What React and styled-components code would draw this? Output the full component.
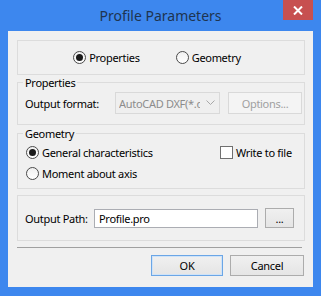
import React from 'react';
import styled, { createGlobalStyle } from 'styled-components';

const GlobalStyle = createGlobalStyle`
  html, body {
    margin: 0;
    padding: 0;
  }
  body {
    font-family: "Noto Sans", "Open Sans", sans-serif;
    font-size: 11px;
    color: #000;
  }
`;

const Frame = styled.div`
  width: 321px;
  height: 296px;
  box-sizing: border-box;
  background: #3d87ee;
  display: flex;
  flex-direction: column;
`;

const TitleBar = styled.div`
  height: 31px;
  display: grid;
  grid-template-columns: 1fr auto 1fr;
  align-items: center;
`;

const Title = styled.div`
  grid-column: 2;
  font-size: 14px;
  color: #1e3450;
  line-height: 31px;
`;

const CloseButton = styled.div`
  grid-column: 3;
  justify-self: end;
  align-self: start;
  width: 30px;
  height: 20px;
  margin-right: 8px;
  background: #c75050;
  display: flex;
  align-items: center;
  justify-content: center;
`;

const Client = styled.div`
  flex: 1;
  margin: 0 8px 9px;
  background: #f0f0f0;
  padding: 9px 8px 11px 9px;
  display: flex;
  flex-direction: column;
  white-space: nowrap;
  letter-spacing: -0.3px;
`;

const Panel = styled.div`
  border: 1px solid #dcdcdc;
  box-sizing: border-box;
  height: ${(p) => p.$height}px;
  margin-top: ${(p) => p.$top || 0}px;
  display: flex;
  align-items: center;
`;

const ModeRow = styled.div`
  flex: 1;
  display: flex;
  justify-content: center;
  gap: 36px;
  padding-right: 8px;
`;

const Group = styled.fieldset`
  margin: ${(p) => p.$top || 0}px 0 0;
  padding: ${(p) => p.$pad};
  border: 1px solid #dcdcdc;
  min-width: 0;
`;

const Legend = styled.legend`
  padding: 0 2px;
  margin-left: -2px;
  line-height: 15px;
`;

const Choice = styled.label`
  display: flex;
  align-items: center;
  gap: 3px;
  height: 16px;
  color: ${(p) => (p.$disabled ? '#a0a0a0' : '#000')};
`;

const RadioDot = styled.span`
  width: 13px;
  height: 13px;
  box-sizing: border-box;
  border-radius: 50%;
  border: 1px solid #4a4a4a;
  background: linear-gradient(#f0f0f0, #ffffff);
  display: flex;
  align-items: center;
  justify-content: center;

  &::after {
    content: '';
    width: 7px;
    height: 7px;
    border-radius: 50%;
    background: #1a1a1a;
    display: ${(p) => (p.$checked ? 'block' : 'none')};
  }
`;

const CheckBox = styled.span`
  width: 13px;
  height: 13px;
  box-sizing: border-box;
  border: 1px solid #707070;
  background: #fff;
`;

const FormatRow = styled.div`
  display: grid;
  grid-template-columns: 82px 105px 74px;
  column-gap: 8px;
  align-items: center;
`;

const Combo = styled.div`
  height: 22px;
  box-sizing: border-box;
  border: 1px solid #d9d9d9;
  background: #efefef;
  color: #8c8c8c;
  display: flex;
  align-items: center;
  padding: 0 4px 0 3px;
`;

const ComboText = styled.span`
  flex: 1;
  overflow: hidden;
  margin-right: 6px;
`;

const Button = styled.div`
  height: ${(p) => p.$height || 21}px;
  width: ${(p) => p.$width}px;
  box-sizing: border-box;
  border: 1px solid ${(p) => (p.$disabled ? '#d9d9d9' : p.$default ? '#6ba6e6' : '#acacac')};
  background: ${(p) => (p.$disabled ? '#f4f4f4' : 'linear-gradient(#f0f0f0, #e5e5e5)')};
  color: ${(p) => (p.$disabled ? '#a0a0a0' : '#000')};
  display: flex;
  align-items: center;
  justify-content: center;
  box-shadow: ${(p) => (p.$default ? 'inset 0 0 0 1px #cfe3f8' : 'none')};
`;

const GeometryGrid = styled.div`
  display: grid;
  grid-template-columns: 194px auto;
  row-gap: 5px;
  padding-left: 1px;
`;

const PathRow = styled.div`
  display: grid;
  grid-template-columns: 62px 164px 29px;
  column-gap: 7px;
  align-items: center;
  padding-left: 7px;
  flex: 1;
`;

const TextInput = styled.div`
  height: 19px;
  box-sizing: border-box;
  border: 1px solid #abadb3;
  background: #fff;
  padding-left: 4px;
  display: flex;
  align-items: center;
`;

const Separator = styled.div`
  height: 1px;
  margin: 6px 3px 0 0;
  background: #a0a0a0;
`;

const ButtonRow = styled.div`
  display: flex;
  justify-content: flex-end;
  gap: 7px;
  margin: 7px 1px 0 0;
`;

function Radio({ label, checked }) {
  return (
    <Choice>
      <RadioDot $checked={checked} />
      {label}
    </Choice>
  );
}

export default function App() {
  return (
    <Frame>
      <GlobalStyle />
      <TitleBar>
        <Title>Profile Parameters</Title>
        <CloseButton>
          <svg width="10" height="9" viewBox="0 0 10 9">
            <path d="M1 0.5 L9 8.5 M9 0.5 L1 8.5" stroke="#fff" strokeWidth="2" />
          </svg>
        </CloseButton>
      </TitleBar>
      <Client>
        <Panel $height={35}>
          <ModeRow>
            <Radio label="Properties" checked />
            <Radio label="Geometry" />
          </ModeRow>
        </Panel>

        <Group $pad="2px 7px 10px 7px">
          <Legend>Properties</Legend>
          <FormatRow>
            <span>Output format:</span>
            <Combo>
              <ComboText>AutoCAD DXF(*.dxf)</ComboText>
              <svg width="9" height="6" viewBox="0 0 9 6">
                <path d="M0.5 0.5 L4.5 4.5 L8.5 0.5" fill="none" stroke="#a8a8a8" strokeWidth="1" />
              </svg>
            </Combo>
            <Button $disabled $width={74} $height={22}>Options...</Button>
          </FormatRow>
        </Group>

        <Group $top={1} $pad="3px 7px 7px 7px">
          <Legend>Geometry</Legend>
          <GeometryGrid>
            <Radio label="General characteristics" checked />
            <Choice>
              <CheckBox />
              Write to file
            </Choice>
            <Radio label="Moment about axis" />
          </GeometryGrid>
        </Group>

        <Panel $height={46} $top={6}>
          <PathRow>
            <span>Output Path:</span>
            <TextInput>Profile.pro</TextInput>
            <Button $width={29} $height={20}>...</Button>
          </PathRow>
        </Panel>

        <Separator />

        <ButtonRow>
          <Button $default $width={72}>OK</Button>
          <Button $width={74}>Cancel</Button>
        </ButtonRow>
      </Client>
    </Frame>
  );
}
